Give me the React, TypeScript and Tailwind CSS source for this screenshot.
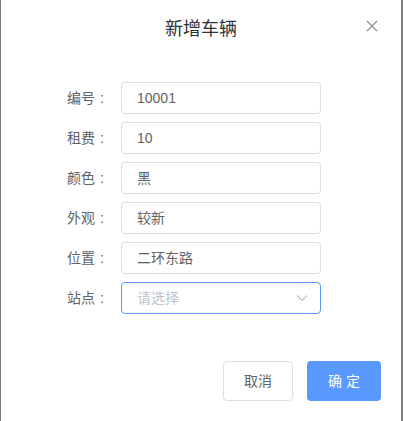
import React from "react";

const font = { fontFamily: '"Liberation Sans", "Noto Sans CJK SC", sans-serif' };

function Row({ label, value, placeholder, active }: { label: string; value?: string; placeholder?: string; active?: boolean }) {
  return (
    <div className="flex items-center h-[32px]">
      <div className="w-[120px] pr-[12px] text-right text-[14px] text-[#606266]">
        {label}
        <span className="inline-block w-[14px] text-center">:</span>
      </div>
      <div
        className={`w-[200px] h-[32px] rounded-[4px] border flex items-center pl-[15px] pr-[12px] text-[14px] ${
          active ? "border-[#5a9cf8]" : "border-[#dcdfe6]"
        }`}
      >
        {value ? (
          <span className="text-[#606266]">{value}</span>
        ) : (
          <span className="text-[#c0c4cc]">{placeholder}</span>
        )}
        {active && (
          <svg className="ml-auto" width="12" height="8" viewBox="0 0 12 8">
            <path d="M1 1.5 L6 6.5 L11 1.5" fill="none" stroke="#c0c4cc" strokeWidth="1.2" />
          </svg>
        )}
      </div>
    </div>
  );
}

export default function App() {
  return (
    <div className="w-[403px] h-[421px] bg-[#7f7f7f] overflow-hidden" style={font}>
      <div className="relative ml-[1px] w-[400px] h-[421px] bg-white flex flex-col">
        <div className="pt-[17px] h-[82px] text-center text-[18px] leading-[24px] text-[#303133]">新增车辆</div>
        <button className="absolute right-[22px] top-[19px] w-[14px] h-[14px] flex items-center justify-center">
          <svg width="12" height="12" viewBox="0 0 12 12">
            <path d="M1 1 L11 11 M11 1 L1 11" stroke="#909399" strokeWidth="1.2" />
          </svg>
        </button>
        <div className="flex flex-col gap-[8px]">
          <Row label="编号" value="10001" />
          <Row label="租费" value="10" />
          <Row label="颜色" value="黑" />
          <Row label="外观" value="较新" />
          <Row label="位置" value="二环东路" />
          <Row label="站点" placeholder="请选择" active />
        </div>
        <div className="flex justify-end gap-[14px] pr-[20px] mt-[47px]">
          <button className="w-[70px] h-[40px] rounded-[4px] border border-[#dcdfe6] bg-white text-[14px] text-[#606266]">取消</button>
          <button className="w-[74px] h-[40px] rounded-[4px] bg-[#5898ff] text-[14px] text-white">确 定</button>
        </div>
      </div>
    </div>
  );
}
